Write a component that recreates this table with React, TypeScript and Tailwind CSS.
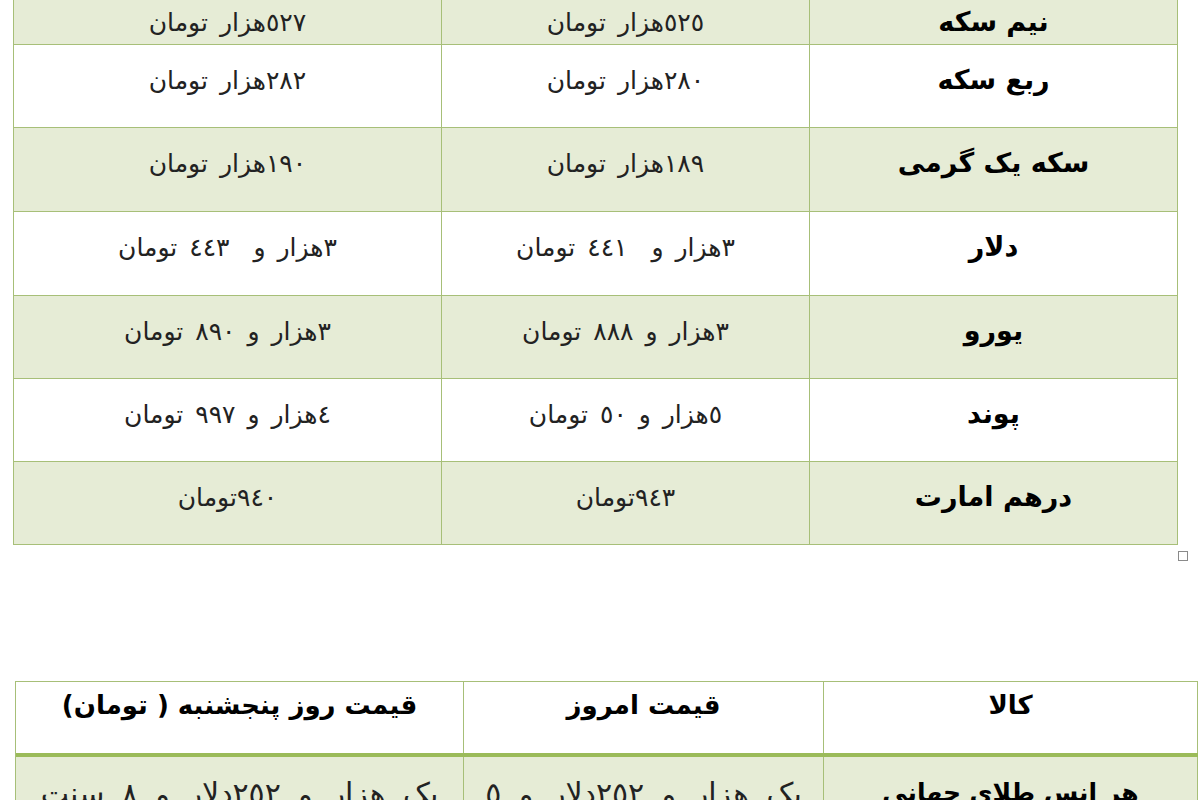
import React from 'react';

type Row = { label: string; today: string; thursday: string };

const rows: Row[] = [
  { label: 'نیم سکه', today: '٥٢٥هزار تومان', thursday: '٥٢٧هزار تومان' },
  { label: 'ربع سکه', today: '٢٨٠هزار تومان', thursday: '٢٨٢هزار تومان' },
  { label: 'سکه یک گرمی', today: '١٨٩هزار تومان', thursday: '١٩٠هزار تومان' },
  { label: 'دلار', today: '٣هزار و  ٤٤١ تومان', thursday: '٣هزار و  ٤٤٣ تومان' },
  { label: 'یورو', today: '٣هزار و ٨٨٨ تومان', thursday: '٣هزار و ٨٩٠ تومان' },
  { label: 'پوند', today: '٥هزار و ٥٠ تومان', thursday: '٤هزار و ٩٩٧ تومان' },
  { label: 'درهم امارت', today: '٩٤٣تومان', thursday: '٩٤٠تومان' },
];

const heights = ['h-[58px]', 'h-[83px]', 'h-[84px]', 'h-[84px]', 'h-[83px]', 'h-[83px]', 'h-[83px]'];

// ارقام کمی فاصله‌دار مثل ورد
const Spaced: React.FC<{ text: string }> = ({ text }) => {
  const parts = text.split(/([٠-٩]+)/);
  return (
    <>
      {parts.map((p, i) =>
        /[٠-٩]/.test(p) ? (
          <span key={i} className="tracking-[5px]">
            {p}
          </span>
        ) : (
          <span key={i}>{p}</span>
        )
      )}
    </>
  );
};

const App: React.FC = () => {
  return (
    <div className="relative w-[1200px] h-[800px] overflow-hidden bg-white text-black font-['DejaVu_Sans',sans-serif]">
      {/* جدول سکه و ارز */}
      <div className="-mt-[13px] ml-[13px] w-[1165px] border-l border-[#a7bf78]">
        {rows.map((row, idx) => (
          <div
            key={row.label}
            className={`grid grid-cols-[428px_368px_368px] border-b border-[#a7bf78] ${heights[idx]} ${
              idx % 2 === 0 ? 'bg-[#e6ecd6]' : 'bg-white'
            }`}
          >
            <div dir="rtl" className="border-r border-[#a7bf78] pt-[17px] text-center text-[25px] text-[#222] whitespace-pre [word-spacing:4px]">
              <Spaced text={row.thursday} />
            </div>
            <div dir="rtl" className="border-r border-[#a7bf78] pt-[17px] text-center text-[25px] text-[#222] whitespace-pre [word-spacing:4px]">
              <Spaced text={row.today} />
            </div>
            <div dir="rtl" className="border-r border-[#a7bf78] pt-[15px] text-center text-[27px] font-bold">
              {row.label}
            </div>
          </div>
        ))}
      </div>

      {/* دستگیره جدول */}
      <div className="absolute left-[1178px] top-[551px] w-[10px] h-[10px] border border-[#8a8a8a] bg-white"></div>

      {/* جدول طلای جهانی */}
      <div className="mt-[136px] ml-[15px] w-[1183px] border-l border-t border-[#a7bf78]">
        <div className="grid grid-cols-[448px_360px_374px] h-[75px] border-b-4 border-[#9bbb59] bg-white">
          <div dir="rtl" className="border-r border-[#a7bf78] pt-[4px] text-center text-[26px] font-bold">
            قیمت روز پنجشنبه ( تومان)
          </div>
          <div dir="rtl" className="border-r border-[#a7bf78] pt-[4px] text-center text-[26px] font-bold">
            قیمت امروز
          </div>
          <div dir="rtl" className="border-r border-[#a7bf78] pt-[4px] text-center text-[26px] font-bold">
            کالا
          </div>
        </div>
        <div className="grid grid-cols-[448px_360px_374px] h-[84px] bg-[#e6ecd6]">
          <div dir="rtl" className="border-r border-[#a7bf78] pt-[14px] text-center text-[30px] text-[#222] whitespace-nowrap [word-spacing:8px]">
            <Spaced text="یک هزار و ٢٥٢دلار و ٨ سنت" />
          </div>
          <div dir="rtl" className="border-r border-[#a7bf78] pt-[14px] text-center text-[30px] text-[#222] whitespace-nowrap [word-spacing:8px]">
            <Spaced text="یک هزار و ٢٥٢دلار و ٥" />
          </div>
          <div dir="rtl" className="border-r border-[#a7bf78] pt-[17px] text-center text-[25px] font-bold">
            هر انس طلای جهانی
          </div>
        </div>
      </div>
    </div>
  );
};

export default App;
